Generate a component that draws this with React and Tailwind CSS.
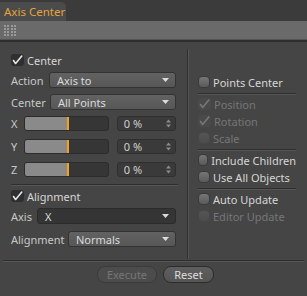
import React from "react";

const font = { fontFamily: '"Noto Sans", "Open Sans", sans-serif' };

function Check({ checked, disabled }) {
  if (checked) {
    return (
      <div className={`w-[13px] h-[12px] rounded-[3px] flex items-center justify-center ${disabled ? "bg-[#4a4a4a]" : "bg-[#2f2f2f]"}`}>
        <svg width="11" height="10" viewBox="0 0 11 10">
          <path d="M1.5 5.5 L3.6 8.5 L9.8 1" fill="none" stroke={disabled ? "#777" : "#e6e6e6"} strokeWidth="1.6" strokeLinecap="round" strokeLinejoin="round" />
        </svg>
      </div>
    );
  }
  return (
    <div className={`w-[12px] h-[12px] rounded-[4px] border ${disabled ? "border-[#474747] bg-gradient-to-b from-[#555] to-[#4c4c4c]" : "border-[#3a3a3a] bg-gradient-to-b from-[#767676] to-[#5a5a5a]"}`} />
  );
}

function CheckRow({ label, checked, disabled, className = "" }) {
  return (
    <div className={`flex items-center h-[16px] ${className}`}>
      <Check checked={checked} disabled={disabled} />
      <span className={`ml-[3px] whitespace-nowrap text-[11px] leading-none ${disabled ? "text-[#767676]" : "text-[#d6d6d6]"}`}>{label}</span>
    </div>
  );
}

function Tri() {
  return (
    <svg width="7" height="4" viewBox="0 0 7 4" className="ml-auto mr-[6px]">
      <path d="M0 0 L7 0 L3.5 4 Z" fill="#dcdcdc" />
    </svg>
  );
}

function Dropdown({ value, dark, className = "" }) {
  return (
    <div className={`flex items-center h-[16px] rounded-[3px] border ${dark ? "bg-[#353535] border-[#2b2b2b]" : "bg-gradient-to-b from-[#626262] to-[#575757] border-[#333]"} ${className}`}>
      <span className="ml-[7px] text-[11px] leading-none text-[#dadada]">{value}</span>
      <Tri />
    </div>
  );
}

function SliderRow({ label, className = "" }) {
  return (
    <div className={`flex items-center h-[15px] ${className}`}>
      <span className="w-[12px] text-[11px] leading-none text-[#c8c8c8]">{label}</span>
      <div className="ml-[1px] w-[86px] h-[15px] rounded-[3px] border border-[#2c2c2c] bg-[#363636] flex overflow-hidden">
        <div className="w-[42px] h-full bg-[#8a8a8a]" />
        <div className="w-[2px] h-full bg-[#f2a21e]" />
      </div>
      <div className="ml-[8px] w-[60px] h-[15px] rounded-[3px] border border-[#2f2f2f] bg-[#3a3a3a] flex items-center">
        <span className="ml-[6px] text-[11px] leading-none text-[#cfcfcf]">0 %</span>
        <svg width="5" height="9" viewBox="0 0 5 9" className="ml-auto mr-[4px]">
          <path d="M0 3.5 L2.5 0.5 L5 3.5 Z M0 5.5 L5 5.5 L2.5 8.5 Z" fill="#8c8c8c" />
        </svg>
      </div>
    </div>
  );
}

function Sep({ className = "" }) {
  return <div className={`h-px bg-[#2f2f2f] border-b border-[#555] box-content ${className}`} />;
}

export default function App() {
  return (
    <div className="w-[307px] h-[296px] bg-[#454545] overflow-hidden flex flex-col" style={font}>
      {/* tab bar */}
      <div className="h-[21px] bg-[#3b3b3b] flex items-end">
        <div className="h-[19px] w-[66px] bg-[#4b4b4b] rounded-tr-[5px] flex items-center pl-[4px]">
          <span className="text-[11.5px] leading-none text-[#e3a43c] whitespace-nowrap">Axis Center</span>
        </div>
      </div>
      {/* toolbar */}
      <div className="h-[18px] bg-[#6a6a6a] flex items-center pl-[4px]">
        <div className="grid grid-cols-4 gap-[1px] w-[12px]">
          {Array.from({ length: 16 }).map((_, i) => (
            <div key={i} className="w-[2px] h-[2px] bg-[#9a9a9a]" />
          ))}
        </div>
      </div>
      <div className="h-[3px] bg-[#2e2e2e] border-t border-[#555]" />
      {/* body */}
      <div className="flex h-[218px]">
        {/* left */}
        <div className="w-[176px] pl-[11px] flex flex-col">
          <CheckRow label="Center" checked className="mt-[10px]" />
          <div className="mt-[4px] flex items-center">
            <span className="w-[38px] text-[11px] leading-none text-[#c8c8c8]">Action</span>
            <Dropdown value="Axis to" className="w-[127px]" />
          </div>
          <div className="mt-[6px] flex items-center">
            <span className="w-[39px] text-[11px] leading-none text-[#c8c8c8]">Center</span>
            <Dropdown value="All Points" className="w-[126px]" />
          </div>
          <SliderRow label="X" className="mt-[6px]" />
          <SliderRow label="Y" className="mt-[8px]" />
          <SliderRow label="Z" className="mt-[8px]" />
          <Sep className="mt-[7px] w-[167px]" />
          <CheckRow label="Alignment" checked className="mt-[2px]" />
          <div className="mt-[4px] flex items-center">
            <span className="w-[26px] text-[11px] leading-none text-[#c8c8c8]">Axis</span>
            <Dropdown value="X" dark className="w-[139px]" />
          </div>
          <div className="mt-[7px] flex items-center">
            <span className="w-[57px] text-[11px] leading-none text-[#c8c8c8]">Alignment</span>
            <Dropdown value="Normals" className="w-[108px]" />
          </div>
        </div>
        {/* divider */}
        <div className="ml-[11px] mt-[7px] mb-[1px] w-[1px] bg-[#2f2f2f] border-r border-[#555] box-content" />
        {/* right */}
        <div className="ml-[9px] w-[98px] flex flex-col">
          <CheckRow label="Points Center" className="mt-[32px]" />
          <Sep className="mt-[3px]" />
          <CheckRow label="Position" checked disabled className="mt-[1px]" />
          <CheckRow label="Rotation" checked disabled className="mt-[1px]" />
          <CheckRow label="Scale" disabled className="mt-[1px]" />
          <Sep className="mt-[3px]" />
          <CheckRow label="Include Children" className="mt-[1px]" />
          <CheckRow label="Use All Objects" className="mt-[1px]" />
          <Sep className="mt-[3px]" />
          <CheckRow label="Auto Update" className="mt-[1px]" />
          <CheckRow label="Editor Update" disabled className="mt-[1px]" />
        </div>
      </div>
      {/* footer */}
      <Sep className="mx-[3px]" />
      <div className="mt-[4px] flex justify-center gap-[6px] pl-[4px]">
        <div className="w-[60px] h-[17px] rounded-[8px] border border-[#3b3b3b] bg-[#4c4c4c] flex items-center justify-center">
          <span className="text-[11px] leading-none text-[#777]">Execute</span>
        </div>
        <div className="w-[51px] h-[17px] rounded-[8px] border border-[#2c2c2c] bg-gradient-to-b from-[#5e5e5e] to-[#555] flex items-center justify-center">
          <span className="text-[11px] leading-none text-[#dedede]">Reset</span>
        </div>
      </div>
    </div>
  );
}
